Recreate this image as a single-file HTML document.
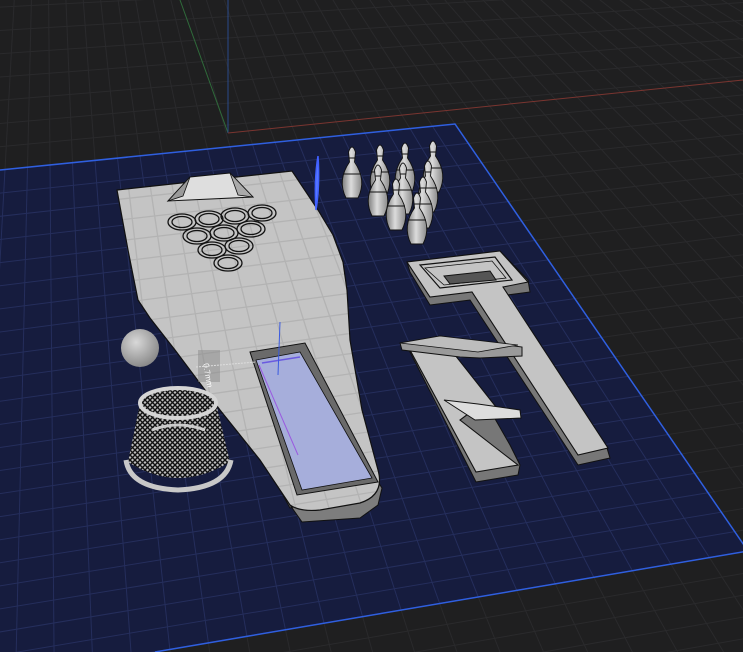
<!DOCTYPE html>
<html><head><meta charset="utf-8"><style>
html,body{margin:0;padding:0;background:#1f1f20;overflow:hidden;width:743px;height:652px}
svg{display:block}
</style></head><body>
<svg id="s" width="743" height="652" viewBox="0 0 743 652" xmlns="http://www.w3.org/2000/svg" style="overflow:hidden">
<defs>
<clipPath id="plate"><polygon points="0,170 455,124 748,551 155,652 0,652"/></clipPath>
<clipPath id="board"><path d="M117,190 L292,171 L318,210 L333,235 L343,262 L347,290 L350,340 L362,410 L378,470 Q385,495 360,503 L320,510 Q300,512 290,505 L260,460 L220,410 L175,350 L150,318 L138,300 L128,250 Z"/></clipPath>
<pattern id="mesh" width="5" height="5" patternUnits="userSpaceOnUse"><rect width="5" height="5" fill="#bdbdbd"/><path d="M0 0L5 5M5 0L0 5" stroke="#111" stroke-width="1.4"/></pattern>
<linearGradient id="pin" x1="0" x2="1"><stop offset="0" stop-color="#7d7d7d"/><stop offset="0.45" stop-color="#dcdcdc"/><stop offset="1" stop-color="#8a8a8a"/></linearGradient>
<radialGradient id="ball" cx="0.4" cy="0.35" r="0.7"><stop offset="0" stop-color="#d8d8d8"/><stop offset="1" stop-color="#858585"/></radialGradient>
</defs>
<rect width="743" height="652" fill="#1f1f20"/>
<g id="bg" stroke="#2a2a2c" stroke-width="1" fill="none"></g>
<polygon points="0,170 455,124 748,551 155,652 0,652" fill="#161c3e"/>
<g id="pg" clip-path="url(#plate)" stroke="#252e5c" stroke-width="1" fill="none"></g>
<polyline points="0,170 455,124 748,551" fill="none" stroke="#2f5fe0" stroke-width="1.5"/>
<line x1="748" y1="551" x2="155" y2="652" stroke="#2f5fe0" stroke-width="1.5"/>
<line x1="180" y1="0" x2="228" y2="133" stroke="#2f6a3a" stroke-width="1"/>
<line x1="228" y1="0" x2="228" y2="133" stroke="#2a4a8a" stroke-width="1"/>
<line x1="228" y1="133" x2="743" y2="80" stroke="#7a3530" stroke-width="1"/>

<path d="M117,190 L121,205 L130,250 L142,292 L165,330 L205,380 L240,425 L270,470 L290,505 L302,522 L360,518 L378,505 L382,488 L378,482 L290,508 Z" fill="#7d7d7d" stroke="#111" stroke-width="1"/>
<path d="M117,190 L292,171 L318,210 L333,235 L343,262 L347,290 L350,340 L362,410 L378,470 Q385,495 360,503 L320,510 Q300,512 290,505 L260,460 L220,410 L175,350 L150,318 L138,300 L128,250 Z" fill="#c4c4c4"/>
<g id="bgrid" clip-path="url(#board)" stroke="#b3b3b3" stroke-width="1.3" fill="none"></g>
<path d="M117,190 L292,171 L318,210 L333,235 L343,262 L347,290 L350,340 L362,410 L378,470 Q385,495 360,503 L320,510 Q300,512 290,505 L260,460 L220,410 L175,350 L150,318 L138,300 L128,250 Z" fill="none" stroke="#111" stroke-width="1.2"/>
<path d="M168,201 L190,177 L230,173 L253,197 Z" fill="#dedede" stroke="#111" stroke-width="1"/>
<path d="M168,201 L190,177 L183,196 Z" fill="#9a9a9a" stroke="#111" stroke-width="0.8"/>
<path d="M253,197 L230,173 L238,195 Z" fill="#aaa" stroke="#111" stroke-width="0.8"/>
<g fill="none" stroke="#111" stroke-width="1.3">
<ellipse cx="182" cy="222" rx="14" ry="8"/><ellipse cx="182" cy="222" rx="10" ry="5.5"/>
<ellipse cx="209" cy="219" rx="14" ry="8"/><ellipse cx="209" cy="219" rx="10" ry="5.5"/>
<ellipse cx="235" cy="216" rx="14" ry="8"/><ellipse cx="235" cy="216" rx="10" ry="5.5"/>
<ellipse cx="262" cy="213" rx="14" ry="8"/><ellipse cx="262" cy="213" rx="10" ry="5.5"/>
<ellipse cx="197" cy="236" rx="14" ry="8"/><ellipse cx="197" cy="236" rx="10" ry="5.5"/>
<ellipse cx="224" cy="233" rx="14" ry="8"/><ellipse cx="224" cy="233" rx="10" ry="5.5"/>
<ellipse cx="251" cy="229" rx="14" ry="8"/><ellipse cx="251" cy="229" rx="10" ry="5.5"/>
<ellipse cx="212" cy="250" rx="14" ry="8"/><ellipse cx="212" cy="250" rx="10" ry="5.5"/>
<ellipse cx="239" cy="246" rx="14" ry="8"/><ellipse cx="239" cy="246" rx="10" ry="5.5"/>
<ellipse cx="228" cy="263" rx="14" ry="8"/><ellipse cx="228" cy="263" rx="10" ry="5.5"/>
</g>
<path d="M250,352 L305,343 L378,482 L297,495 Z" fill="#6a6a6a" stroke="#111" stroke-width="1"/>
<path d="M256,360 L300,352 L372,478 L302,490 Z" fill="#a6aedb" stroke="#111" stroke-width="0.8"/>
<line x1="259" y1="365" x2="298" y2="455" stroke="#9a5ae0" stroke-width="1"/>
<line x1="262" y1="363" x2="300" y2="357" stroke="#6a5ae0" stroke-width="1.5"/>
<line x1="280" y1="322" x2="278" y2="375" stroke="#3a5ae0" stroke-width="1"/>
<rect x="198" y="350" width="22" height="32" fill="#8a8a8a" opacity="0.5"/>
<text x="203" y="372" font-family="Liberation Sans, sans-serif" font-size="8" fill="#fff" transform="rotate(80 208 368)">0.7mm</text>
<line x1="196" y1="367" x2="256" y2="362" stroke="#ddd" stroke-width="1" stroke-dasharray="2,1"/>
<path d="M318,156 Q314,180 316,210 Q320,185 318,156" fill="#5a7aff" stroke="#4060ff" stroke-width="1.5"/>
<g id="pins" fill="url(#pin)" stroke="#111" stroke-width="0.9"></g>
<circle cx="140" cy="348" r="19" fill="url(#ball)"/>
<path d="M140,403 L128,462 Q178,494 230,462 L216,403 Z" fill="url(#mesh)"/>
<path d="M126,460 Q130,488 178,490 Q226,488 231,460" fill="none" stroke="#c8c8c8" stroke-width="5"/>
<ellipse cx="178" cy="403" rx="38" ry="15" fill="url(#mesh)" stroke="#d5d5d5" stroke-width="4"/>
<path d="M152,430 Q178,420 205,430" fill="none" stroke="#ccc" stroke-width="3"/>
<path d="M407,262 L410,272 L430,305 L470,300 L578,465 L610,458 L607,448 L500,296 L530,292 L528,280 L500,251 Z" fill="#777" stroke="#111" stroke-width="1"/>
<path d="M407,262 L500,251 L528,282 L503,287 L608,448 L578,455 L472,292 L430,297 Z" fill="#c4c4c4" stroke="#111" stroke-width="1.1"/>
<path d="M420,265 L495,257 L512,280 L440,288 Z" fill="none" stroke="#111" stroke-width="1.2"/>
<path d="M425,268 L492,261 L506,278 L444,285 Z" fill="none" stroke="#111" stroke-width="0.8"/>
<path d="M444,276 L490,271 L496,280 L450,284 Z" fill="#555" stroke="#111"/>
<path d="M410,352 L470,470 L476,482 L518,475 L520,465 L510,445 L490,410 L450,358 Z" fill="#777" stroke="#111" stroke-width="1"/>
<path d="M410,350 L455,355 L500,412 L480,405 L460,420 L505,455 L518,465 L476,472 Z" fill="#c4c4c4" stroke="#111" stroke-width="1.1"/>
<path d="M444,400 L478,404 L520,410 L521,418 L475,420 Z" fill="#ddd" stroke="#111"/>
<path d="M400,343 L440,336 L522,347 L522,356 L480,358 L460,357 L402,350 Z" fill="#9a9a9a" stroke="#111"/>
<path d="M400,343 L440,336 L518,345 L478,352 Z" fill="#bdbdbd" stroke="#111" stroke-width="0.8"/>
</svg>
<script>
(function(){
var NS="http://www.w3.org/2000/svg";
var A=[-40,174],B=[455,124],C=[748,551],D=[-100,695];
function P(u,v){var x=(1-u)*(1-v)*A[0]+u*(1-v)*B[0]+u*v*C[0]+(1-u)*v*D[0];var y=(1-u)*(1-v)*A[1]+u*(1-v)*B[1]+u*v*C[1]+(1-u)*v*D[1];return [x,y];}
function L(g,p,q){var l=document.createElementNS(NS,"line");l.setAttribute("x1",p[0]);l.setAttribute("y1",p[1]);l.setAttribute("x2",q[0]);l.setAttribute("y2",q[1]);g.appendChild(l);}
var pg=document.getElementById("pg"),bg=document.getElementById("bg"),bgr=document.getElementById("bgrid"),N=22;
for(var i=0;i<=N;i++){var t=i/N;L(pg,P(t,0),P(t,1));L(pg,P(0,t),P(1,t));}
for(var i=-N;i<=2*N;i++){var t=i/N;L(bg,P(t,-1.2),P(t,2));L(bg,P(-1.2,t),P(2.2,t));}
for(var i=0;i<=24;i++){var t=i/24;L(bgr,P(t,0),P(t,1));L(bgr,P(0,t),P(1,t));}
var pins=document.getElementById("pins");
var pos=[[352,150],[380,148],[405,146],[433,144],[378,168],[403,166],[428,164],[396,182],[423,180],[417,196]];
pos.sort(function(a,b){return a[1]-b[1];});
pos.forEach(function(p){var x=p[0],y=p[1];
var s=document.createElementNS(NS,"path");
s.setAttribute("d","M"+(x-3.5)+","+(y+2)+" Q"+x+","+(y-8)+" "+(x+3.5)+","+(y+2)+" L"+(x+2.5)+","+(y+12)+" Q"+(x+15)+","+(y+30)+" "+(x+6)+","+(y+48)+" L"+(x-6)+","+(y+48)+" Q"+(x-15)+","+(y+30)+" "+(x-2.5)+","+(y+12)+" Z");
pins.appendChild(s);
var l=document.createElementNS(NS,"path");l.setAttribute("d","M"+(x-3)+","+(y+8)+" L"+(x+3)+","+(y+8)+" M"+(x-9)+","+(y+24)+" L"+(x+9)+","+(y+24));l.setAttribute("fill","none");pins.appendChild(l);});
})();
</script>
</body></html>
